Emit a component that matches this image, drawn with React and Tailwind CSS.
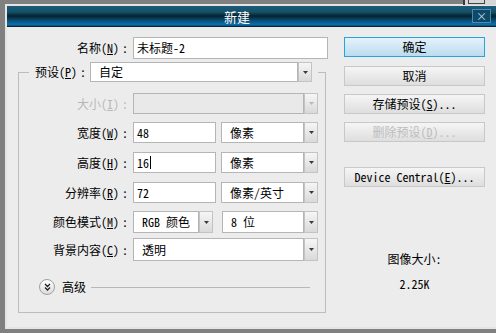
const FONT = "font-['Noto_Sans_Mono_CJK_SC','Noto_Sans_CJK_SC',monospace]";

const Chevron = ({ disabled }) => (
  <svg width="5" height="3" viewBox="0 0 5 3">
    <polygon points="0,0 5,0 2.5,3" fill={disabled ? "#b8b8b8" : "#3a3a3a"} />
  </svg>
);

const Select = ({ value, width, disabled, height = "h-[21px]" }) => (
  <div className={`flex ${height} ${width}`}>
    <div
      className={`flex flex-1 items-center border border-[#b5b5b5] pl-[8px] ${
        disabled ? "bg-[#e9e9e9]" : "bg-white"
      }`}
    >
      {value}
    </div>
    <div className="flex w-[14px] items-center justify-center border border-[#c3c3c3] bg-[linear-gradient(to_bottom,#f6f6f6,#d9d9d9)]">
      <Chevron disabled={disabled} />
    </div>
  </div>
);

const Input = ({ children, width }) => (
  <div className={`flex h-[21px] items-center border border-[#b5b5b5] bg-white pl-[3px] ${width}`}>
    {children}
  </div>
);

const Label = ({ text, k, width = "w-[114px]", disabled }) => (
  <div
    className={`${width} shrink-0 whitespace-nowrap pr-[5px] text-right ${
      disabled ? "text-[#b8b8b8]" : ""
    }`}
  >
    {text}(<span className="underline">{k}</span>)<span className="ml-[3px]">:</span>
  </div>
);

const Button = ({ children, primary, disabled, mt }) => (
  <div
    className={`flex h-[20px] w-[141px] items-center justify-center border ${mt} ${
      primary
        ? "border-[#29a3db] bg-[linear-gradient(to_bottom,#e4f2fb,#bcdcee)]"
        : "border-[#c8c8c8] bg-[linear-gradient(to_bottom,#f5f5f5,#dedede)]"
    } ${disabled ? "text-[#bdbdbd]" : "text-black"}`}
  >
    {children}
  </div>
);

const Row = ({ children, mt }) => <div className={`flex items-center ${mt}`}>{children}</div>;

export default function App() {
  return (
    <div className={`relative h-[333px] w-[496px] overflow-hidden bg-[#808080] text-[12px] leading-none ${FONT}`}>
      {/* window behind, top right */}
      <div className="absolute right-0 top-0 h-[5px] w-[33px] border-l-2 border-[#3c3c3c] bg-[#d6d6d6]">
        <div className="ml-[3px] h-[4px] w-[17px] border-x border-b border-[#444]" />
      </div>

      <div className="ml-[5px] mt-[4px] h-[325px] w-[500px] border-2 border-[#e4e4e4] bg-[#ececec]">
        <div className="relative flex h-[21px] items-center justify-center border-b border-[#0a2536] bg-[linear-gradient(to_bottom,#1c5c79_0%,#155068_30%,#05222f_50%,#0b4d74_72%,#0d6fae_92%,#0a4b70_100%)] pr-[36px]">
          <span className="text-[13px] font-medium text-white">新建</span>
          <div className="absolute left-[465px] top-[3px] flex h-[14px] w-[19px] items-center justify-center border border-[#4b8bb0] bg-[#0d4a6a]">
            <span className="text-[11px] text-[#c8d8e0]">×</span>
          </div>
        </div>

        <div className="flex">
          <div className="w-[337px] shrink-0">
            <Row mt="mt-[10px]">
              <Label text="名称" k="N" width="w-[126px]" />
              <Input width="w-[195px] h-[22px]">未标题-2</Input>
            </Row>

            <fieldset className="ml-[11px] mt-[3px] h-[251px] w-[308px] border border-[#bcbcbc]">
              <legend className="ml-[10px] flex w-[289px] items-center bg-[#ececec] pl-[6px] pr-[6px]">
                <div className="mr-[4px] whitespace-nowrap">
                  预设(<span className="underline">P</span>)<span className="ml-[3px]">:</span>
                </div>
                <Select value="自定" width="w-[222px]" height="h-[20px]" />
              </legend>

              <Row mt="mt-[11px]">
                <Label text="大小" k="I" disabled />
                <Select value="" width="w-[185px]" disabled />
              </Row>
              <Row mt="mt-[8px]">
                <Label text="宽度" k="W" />
                <Input width="w-[83px]">48</Input>
                <div className="ml-[5px]">
                  <Select value="像素" width="w-[97px]" />
                </div>
              </Row>
              <Row mt="mt-[9px]">
                <Label text="高度" k="H" />
                <Input width="w-[83px]">
                  16<span className="ml-px h-[13px] w-px bg-black" />
                </Input>
                <div className="ml-[5px]">
                  <Select value="像素" width="w-[97px]" />
                </div>
              </Row>
              <Row mt="mt-[9px]">
                <Label text="分辨率" k="R" />
                <Input width="w-[83px]">72</Input>
                <div className="ml-[5px]">
                  <Select value="像素/英寸" width="w-[97px]" />
                </div>
              </Row>
              <Row mt="mt-[8px]">
                <Label text="颜色模式" k="M" />
                <Select value="RGB 颜色" width="w-[80px]" height="h-[22px]" />
                <div className="ml-[9px]">
                  <Select value="8 位" width="w-[96px]" height="h-[22px]" />
                </div>
              </Row>
              <Row mt="mt-[5px]">
                <Label text="背景内容" k="C" />
                <Select value="透明" width="w-[185px]" height="h-[23px]" />
              </Row>

              <div className="mt-[18px] flex items-center">
                <div className="ml-[20px] flex h-[16px] w-[16px] items-center justify-center rounded-full border border-[#a0a0a0] bg-[linear-gradient(to_bottom,#ffffff,#dcdcdc)]">
                  <svg width="7" height="8" viewBox="0 0 7 8">
                    <path d="M1 1 L3.5 3.5 L6 1 M1 4.5 L3.5 7 L6 4.5" stroke="#222" strokeWidth="1.3" fill="none" />
                  </svg>
                </div>
                <span className="ml-[7px]">高级</span>
                <div className="ml-[5px] h-px w-[219px] bg-[#b8b8b8]" />
              </div>
            </fieldset>
          </div>

          <div className="flex flex-col">
            <Button primary mt="mt-[10px]">确定</Button>
            <Button mt="mt-[9px]">取消</Button>
            <Button mt="mt-[8px]">
              存储预设(<span className="underline">S</span>)...
            </Button>
            <Button disabled mt="mt-[8px]">
              删除预设(<span className="underline">D</span>)...
            </Button>
            <Button mt="mt-[25px]">
              Device Central(<span className="underline">E</span>)...
            </Button>
            <div className="mt-[66px] text-center">图像大小:</div>
            <div className="mt-[13px] text-center">2.25K</div>
          </div>
        </div>
      </div>
    </div>
  );
}
